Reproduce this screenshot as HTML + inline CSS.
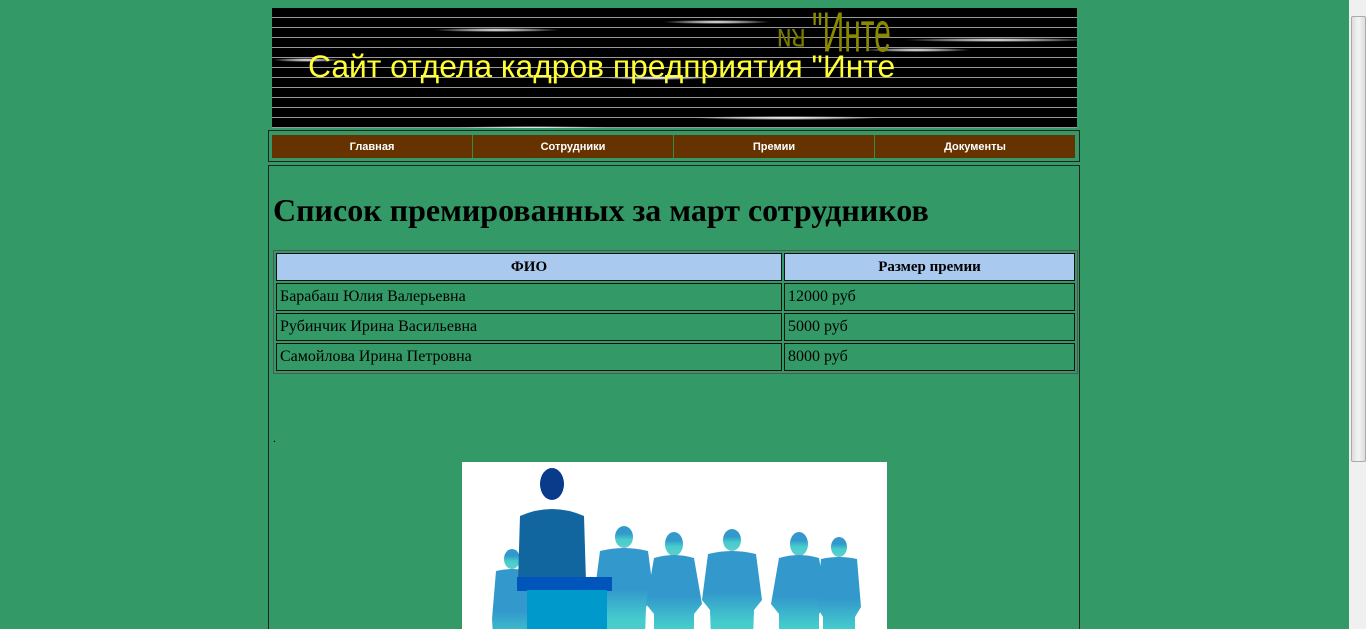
<!DOCTYPE html>
<html><head><meta charset="utf-8"><style>
html,body{margin:0;padding:0;width:1366px;height:629px;overflow:hidden;background:#339966;font-family:"Liberation Serif",serif}
#wrap{position:relative;width:1366px;height:629px;overflow:hidden}
.hdr{position:absolute;left:272px;top:8px;width:805px;height:120px;background:#000;overflow:hidden;
background-image:repeating-linear-gradient(to bottom,transparent 0,transparent 9px,#999 9px,#999 10px);}
.hdr .t{position:absolute;left:36px;top:40px;color:#ffff33;font:31.8px "Liberation Sans",sans-serif;white-space:nowrap}
.hdr .m{position:absolute;white-space:nowrap;font-family:"Liberation Sans",sans-serif}
.glow{position:absolute;height:4px;border-radius:50%;background:radial-gradient(ellipse,#fff 0,rgba(255,255,255,.5) 40%,transparent 70%)}
.nav{position:absolute;left:268px;top:130px;width:810px;height:30px;border:1px solid #222;}
.nav div{position:absolute;top:4px;height:23px;width:200px;background:#663300;color:#fff;font:bold 11px "Liberation Sans",sans-serif;text-align:center;line-height:25px;border-right:1px solid #3a8a4a}
.box{position:absolute;left:268px;top:165px;width:810px;height:470px;border:1px solid #222;overflow:hidden}
h1{position:absolute;left:4px;top:26px;margin:0;font-size:32px;font-weight:bold;color:#000}
table{position:absolute;left:4px;top:84px;width:805px;border:1px solid #555;border-spacing:2px;border-collapse:separate;}
td,th{border:1px solid #111;height:26px;padding:0 3px;font-size:16px;color:#000}
th{background:#a9c9ee;text-align:center;font-size:15px}
.dot{position:absolute;left:4px;top:265px;font-size:12px}
.img{position:absolute;left:193px;top:296px;width:425px;height:200px;background:#fff;overflow:hidden}
.sb{position:absolute;left:1349px;top:0;width:17px;height:629px;background:#f0f0f0}
.sb .th{position:absolute;left:2px;top:16px;width:13px;height:444px;background:linear-gradient(to right,#ddd,#f4f4f4,#ddd);border:1px solid #aaa;border-radius:2px}
</style></head><body><div id="wrap">
<div class="hdr">
<div class="glow" style="left:160px;top:20px;width:130px"></div>
<div class="glow" style="left:390px;top:12px;width:110px"></div>
<div class="glow" style="left:590px;top:40px;width:110px"></div>
<div class="glow" style="left:630px;top:30px;width:190px"></div>
<div class="glow" style="left:0px;top:50px;width:70px"></div>
<div class="glow" style="left:330px;top:68px;width:110px"></div>
<div class="glow" style="left:420px;top:108px;width:190px"></div>
<div class="glow" style="left:180px;top:118px;width:160px"></div>
<div class="m" style="left:540px;top:-6px;transform:scaleY(1.9);transform-origin:left top;color:#8a8a00;font-size:30px">"Инте</div>
<div class="m" style="left:505px;top:52px;transform:scale(1,-1.3);transform-origin:left top;color:#7a7a00;font-size:26px">ия</div>
<div class="t">Сайт отдела кадров предприятия "Инте</div>
</div>
<div class="nav">
<div style="left:3px">Главная</div>
<div style="left:204px">Сотрудники</div>
<div style="left:405px">Премии</div>
<div style="left:606px;border-right:none">Документы</div>
</div>
<div class="box">
<h1>Список премированных за март сотрудников</h1>
<table>
<tr><th style="width:498px">ФИО</th><th>Размер премии</th></tr>
<tr><td>Барабаш Юлия Валерьевна</td><td>12000 руб</td></tr>
<tr><td>Рубинчик Ирина Васильевна</td><td>5000 руб</td></tr>
<tr><td>Самойлова Ирина Петровна</td><td>8000 руб</td></tr>
</table>
<div class="dot">.</div>
<div class="img">
<svg width="425" height="200" viewBox="0 0 425 200">
<defs><linearGradient id="g" x1="0" y1="0" x2="0" y2="1"><stop offset="0.35" stop-color="#3399cc"/><stop offset="0.6" stop-color="#44cccc"/><stop offset="1" stop-color="#66cccc"/></linearGradient></defs>
<g fill="url(#g)">
<g transform="translate(162,75)"><ellipse cx="0" cy="0" rx="9" ry="11"/><path d="M-24 14 Q0 8 24 14 L30 60 L22 70 L20 130 L-20 130 L-22 70 L-30 60Z"/></g>
<g transform="translate(212,82)"><ellipse cx="0" cy="0" rx="9" ry="12"/><path d="M-20 14 Q0 8 20 14 L28 60 L20 70 L20 130 L-20 130 L-20 70 L-28 60Z"/></g>
<g transform="translate(270,78)"><ellipse cx="0" cy="0" rx="9" ry="11"/><path d="M-24 14 Q0 8 24 14 L30 60 L22 70 L20 130 L-20 130 L-22 70 L-30 60Z"/></g>
<g transform="translate(337,82)"><ellipse cx="0" cy="0" rx="9" ry="12"/><path d="M-20 14 Q0 8 20 14 L28 60 L20 70 L20 130 L-20 130 L-20 70 L-28 60Z"/></g>
<g transform="translate(377,85)"><ellipse cx="0" cy="0" rx="8" ry="10"/><path d="M-18 12 Q0 8 18 12 L22 60 L16 70 L16 130 L-16 130 L-16 70 L-22 60Z"/></g>
<g transform="translate(50,97)"><ellipse cx="0" cy="0" rx="8" ry="10"/><path d="M-16 12 Q0 8 16 12 L20 60 L16 130 L-16 130 L-20 60Z"/></g>
</g>
<ellipse cx="90" cy="22" rx="12" ry="16" fill="#0a3a8a"/>
<path d="M58 54 Q90 40 122 54 L124 120 L56 120Z" fill="#1166a0"/>
<rect x="55" y="115" width="95" height="14" fill="#0055bb"/>
<rect x="65" y="128" width="80" height="80" fill="#0099cc"/>
</svg>
</div>
</div>
<div class="sb"><div class="th"></div></div>
</div></body></html>
